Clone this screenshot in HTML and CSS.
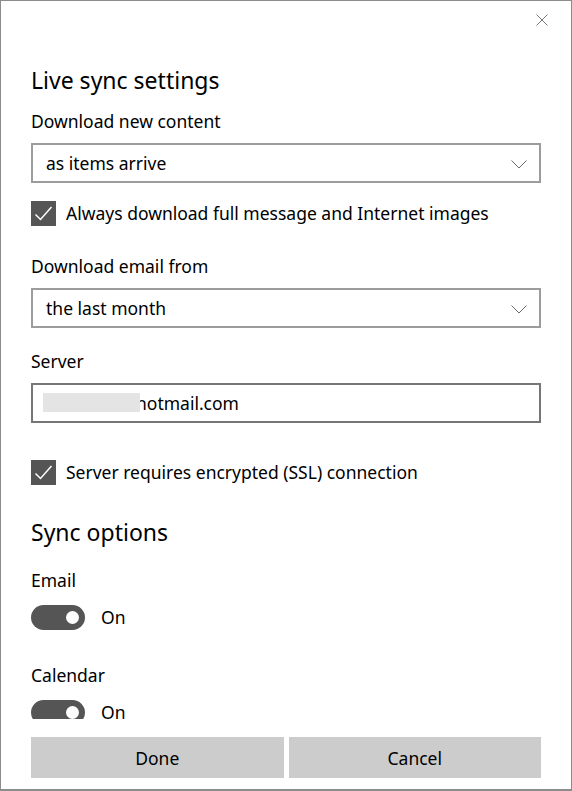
FILE: index.html
```html
<!DOCTYPE html>
<html>
<head>
<meta charset="utf-8">
<link rel="stylesheet" href="styles.css">
</head>
<body>
<div class="dialog">
  <div class="header">
    <svg class="close" width="12" height="12" viewBox="0 0 12 12"><path d="M0.5 0.5 L11.5 11.5 M11.5 0.5 L0.5 11.5" stroke="#7a7a7a" stroke-width="1" fill="none"/></svg>
  </div>
  <div class="content">
    <h1 class="title t-first">Live sync settings</h1>
    <div class="label l-dl">Download new content</div>
    <div class="select s-1"><span>as items arrive</span>
      <svg class="chev" width="16" height="9" viewBox="0 0 16 9"><path d="M0.5 0.5 L8 8 L15.5 0.5" stroke="#6a6a6a" stroke-width="1" fill="none"/></svg>
    </div>
    <div class="check c-1">
      <span class="box"><svg width="25" height="25" viewBox="0 0 25 25"><path d="M4.5 13.5 L9.5 18.5 L20.5 6" stroke="#fff" stroke-width="1.5" fill="none"/></svg></span>
      <span class="check-text">Always download full message and Internet images</span>
    </div>
    <div class="label l-from">Download email from</div>
    <div class="select s-2"><span>the last month</span>
      <svg class="chev" width="16" height="9" viewBox="0 0 16 9"><path d="M0.5 0.5 L8 8 L15.5 0.5" stroke="#6a6a6a" stroke-width="1" fill="none"/></svg>
    </div>
    <div class="label l-server">Server</div>
    <div class="input"><span class="blur"></span><span class="input-text">hotmail.com</span></div>
    <div class="check c-2">
      <span class="box"><svg width="25" height="25" viewBox="0 0 25 25"><path d="M4.5 13.5 L9.5 18.5 L20.5 6" stroke="#fff" stroke-width="1.5" fill="none"/></svg></span>
      <span class="check-text">Server requires encrypted (SSL) connection</span>
    </div>
    <h2 class="title t-sync">Sync options</h2>
    <div class="label l-email">Email</div>
    <div class="toggle-row tr-1"><span class="toggle"><span class="knob"></span></span><span class="toggle-text">On</span></div>
    <div class="label l-cal">Calendar</div>
    <div class="toggle-row tr-2"><span class="toggle"><span class="knob"></span></span><span class="toggle-text">On</span></div>
  </div>
  <div class="footer">
    <button class="btn">Done</button>
    <button class="btn">Cancel</button>
  </div>
</div>
</body>
</html>
```

FILE: styles.css
```css
html, body {
  margin: 0;
  padding: 0;
  background: #ffffff;
}
body {
  font-family: "Noto Sans", "Open Sans", sans-serif;
  color: #000;
}
.dialog {
  width: 572px;
  height: 791px;
  box-sizing: border-box;
  border: 1px solid #8c8c8c;
  border-bottom-width: 2px;
  border-right-width: 1px;
  display: flex;
  flex-direction: column;
  overflow: hidden;
  background: #fff;
}
.header {
  height: 40px;
  flex: none;
  display: flex;
  justify-content: flex-end;
  align-items: flex-start;
  padding-top: 13px;
  padding-right: 23px;
  box-sizing: border-box;
}
.close { display: block; }
.content {
  height: 678px;
  flex: none;
  overflow: hidden;
  padding: 0 30px;
  display: flex;
  flex-direction: column;
}
.title {
  margin: 0;
  font-weight: 400;
  font-size: 23px;
  line-height: 32px;
  height: 32px;
}
.t-first { margin-top: 23px; }
.t-sync { margin-top: 31px; }
.label {
  font-size: 17.5px;
  line-height: 24px;
  height: 24px;
}
.l-dl { margin-top: 13px; }
.l-from { margin-top: 28px; }
.l-server { margin-top: 21px; }
.l-email { margin-top: 20px; }
.l-cal { margin-top: 33px; }
.select {
  margin-top: 10px;
  height: 40px;
  box-sizing: border-box;
  border: 2px solid #9c9c9c;
  display: flex;
  align-items: center;
  justify-content: space-between;
  padding: 0 12px 0 13px;
  font-size: 17.5px;
  flex: none;
}
.chev { display: block; margin-top: 2px; }
.input {
  margin-top: 10px;
  height: 40px;
  box-sizing: border-box;
  border: 2px solid #767676;
  display: flex;
  align-items: center;
  padding-left: 103px;
  font-size: 17.5px;
  position: relative;
  flex: none;
}
.blur {
  position: absolute;
  left: 10px;
  top: 8px;
  width: 97px;
  height: 19px;
  background: #e4e4e4;
}
.check {
  display: flex;
  align-items: center;
  height: 25px;
  font-size: 17.5px;
  flex: none;
}
.c-1 { margin-top: 18px; }
.c-2 { margin-top: 37px; }
.box {
  width: 25px;
  height: 25px;
  background: #555555;
  flex: none;
  display: block;
}
.box svg { display: block; }
.check-text { margin-left: 10px; line-height: 25px; }
.toggle-row {
  margin-top: 13px;
  display: flex;
  align-items: center;
  height: 25px;
  flex: none;
  font-size: 17.5px;
}
.toggle {
  width: 54px;
  height: 25px;
  border-radius: 13px;
  background: #555555;
  display: flex;
  align-items: center;
  justify-content: flex-end;
  padding-right: 6px;
  box-sizing: border-box;
  flex: none;
}
.knob {
  width: 13px;
  height: 13px;
  border-radius: 50%;
  background: #fff;
  display: block;
}
.toggle-text { margin-left: 16px; line-height: 25px; }
.footer {
  flex: none;
  display: flex;
  gap: 5px;
  padding: 18px 30px 0;
}
.btn {
  flex: 1;
  height: 41px;
  border: none;
  background: #cccccc;
  font-family: "Noto Sans", "Open Sans", sans-serif;
  font-size: 17.5px;
  color: #000;
  padding: 0;
  margin: 0;
}
```
